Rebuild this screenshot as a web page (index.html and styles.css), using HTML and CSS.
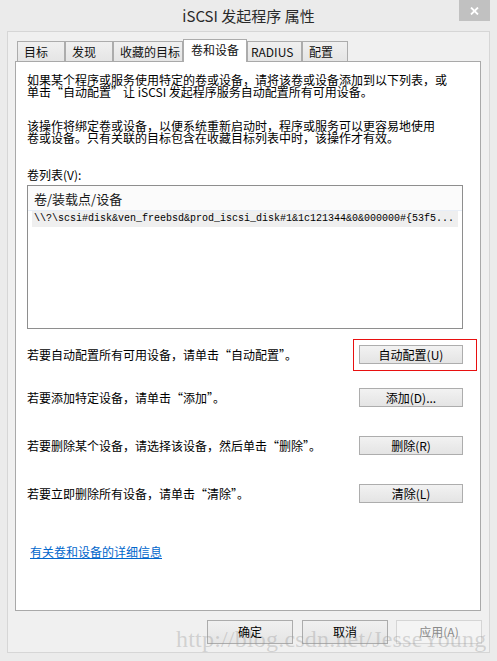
FILE: index.html
```html
<!DOCTYPE html>
<html lang="zh-CN">
<head>
<meta charset="utf-8">
<title>iSCSI 发起程序 属性</title>
<link rel="stylesheet" href="styles.css">
</head>
<body>
<div class="window">
  <div class="titlebar">
    <div class="title">iSCSI 发起程序 属性</div>
    <div class="close">
      <svg width="9" height="8" viewBox="0 0 9 8"><path d="M1 0.5 L8 7.5 M8 0.5 L1 7.5" stroke="#fff" stroke-width="1.8" fill="none"/></svg>
    </div>
  </div>
  <div class="client">
    <div class="tabs">
      <div class="tab w1">目标</div>
      <div class="tab w2">发现</div>
      <div class="tab w3">收藏的目标</div>
      <div class="tab w4 sel">卷和设备</div>
      <div class="tab w5">RADIUS</div>
      <div class="tab w6">配置</div>
    </div>
    <div class="panel">
      <p class="para">如果某个程序或服务使用特定的卷或设备，请将该卷或设备添加到以下列表，或<br>单击“自动配置”让 iSCSI 发起程序服务自动配置所有可用设备。</p>
      <p class="para para2">该操作将绑定卷或设备，以便系统重新启动时，程序或服务可以更容易地使用<br>卷或设备。只有关联的目标包含在收藏目标列表中时，该操作才有效。</p>
      <div class="label">卷列表(V):</div>
      <div class="listbox">
        <div class="lv-head">卷/装载点/设备</div>
        <div class="lv-row">\\?\scsi#disk&amp;ven_freebsd&amp;prod_iscsi_disk#1&amp;1c121344&amp;0&amp;000000#{53f5...</div>
      </div>
      <div class="row r1">
        <span>若要自动配置所有可用设备，请单击“自动配置”。</span>
        <span class="btn marked">自动配置(U)</span>
      </div>
      <div class="row r2">
        <span>若要添加特定设备，请单击“添加”。</span>
        <span class="btn">添加(D)...</span>
      </div>
      <div class="row r3">
        <span>若要删除某个设备，请选择该设备，然后单击“删除”。</span>
        <span class="btn">删除(R)</span>
      </div>
      <div class="row r3">
        <span>若要立即删除所有设备，请单击“清除”。</span>
        <span class="btn">清除(L)</span>
      </div>
      <a class="link" href="#">有关卷和设备的详细信息</a>
    </div>
    <div class="footer">
      <span class="fbtn ok">确定</span>
      <span class="fbtn">取消</span>
      <span class="fbtn disabled">应用(A)</span>
    </div>
    <div class="watermark">http://blog.csdn.net/JesseYoung</div>
  </div>
</div>
</body>
</html>
```
FILE: styles.css
```css
* { box-sizing: border-box; }
html, body { margin: 0; padding: 0; }
body {
  width: 497px;
  height: 661px;
  overflow: hidden;
  background: #ebebeb;
  font-family: "Noto Sans CJK SC", "Noto Sans", sans-serif;
  font-size: 12px;
  color: #000;
}
.window {
  display: flex;
  flex-direction: column;
  height: 661px;
}
.titlebar {
  height: 31px;
  flex: none;
  display: grid;
  grid-template-columns: 1fr auto 1fr;
}
.title {
  grid-column: 2;
  font-size: 15px;
  line-height: 31px;
  color: #2a2a2a;
  white-space: nowrap;
}
.close {
  grid-column: 3;
  justify-self: end;
  align-self: start;
  width: 31px;
  height: 21px;
  margin-right: 7px;
  background: #c1c1c1;
  display: flex;
  align-items: center;
  justify-content: center;
}
.client {
  flex: 1;
  margin: 0 7px 8px;
  border: 1px solid #d6d6d6;
  background: #f0f0f0;
  padding: 7px 0 0 7px;
  position: relative;
}
.tabs {
  display: flex;
  align-items: flex-end;
  height: 22px;
  padding-left: 2px;
}
.tab {
  height: 20px;
  border: 1px solid #acacac;
  border-bottom: 0;
  background: linear-gradient(#f0f0f0, #e5e5e5);
  line-height: 19px;
  padding-left: 6px;
  white-space: nowrap;
  color: #111;
}
.tab.sel {
  height: 23px;
  margin-bottom: -1px;
  background: #fff;
  line-height: 20px;
  padding-left: 7px;
  position: relative;
  z-index: 1;
}
.w1 { width: 48px; }
.w2 { width: 48px; }
.w3 { width: 70px; }
.w4 { width: 64px; }
.w5 { width: 55px; padding-left: 3px; }
.w6 { width: 46px; }
.panel {
  width: 466px;
  height: 550px;
  border: 1px solid #a9a9a9;
  background: #fff;
  padding: 12px 17px 0 11px;
  display: flex;
  flex-direction: column;
}
.para {
  margin: 0;
  line-height: 12px;
  white-space: nowrap;
}
.para2 { margin-top: 22px; }
.label {
  margin-top: 25px;
  line-height: 12px;
}
.listbox {
  margin-top: 4px;
  width: 436px;
  height: 144px;
  flex: none;
  border: 1px solid #8e8e8e;
  background: #fff;
}
.lv-head {
  height: 25px;
  border-bottom: 1px solid #e8eef7;
  background: #fbfbfb;
  font-size: 13px;
  line-height: 25px;
  padding-left: 6px;
  color: #1a1a1a;
}
.lv-row {
  margin-left: 4px;
  width: 426px;
  height: 16px;
  background: #efefef;
  font-family: "Liberation Mono", "DejaVu Sans Mono", monospace;
  font-size: 10px;
  line-height: 16px;
  padding-left: 2px;
  white-space: nowrap;
  overflow: hidden;
}
.row {
  display: flex;
  justify-content: space-between;
  align-items: center;
  height: 19px;
}
.r1 { margin-top: 16px; }
.r2 { margin-top: 24px; }
.r3 { margin-top: 29px; }
.btn {
  width: 104px;
  height: 19px;
  border: 1px solid #adadad;
  background: linear-gradient(#f2f2f2, #e4e4e4);
  text-align: center;
  line-height: 17px;
}
.marked { position: relative; }
.marked::after {
  content: "";
  position: absolute;
  top: -7px;
  left: -7px;
  right: -15px;
  bottom: -8px;
  border: 1px solid #e81010;
}
.link {
  margin-top: 42px;
  margin-left: 3px;
  align-self: flex-start;
  color: #0066cc;
  line-height: 13px;
  text-decoration: underline;
}
.footer {
  display: flex;
  justify-content: flex-end;
  gap: 8px;
  margin-top: 9px;
  padding-right: 7px;
}
.fbtn {
  width: 86px;
  height: 24px;
  border: 1px solid #acacac;
  background: linear-gradient(#f0f0f0, #e5e5e5);
  text-align: center;
  line-height: 22px;
}
.fbtn.ok { margin-right: 1px; }
.fbtn.disabled {
  border-color: #d5d5d5;
  background: #f4f4f4;
  color: #8a8a8a;
}
.watermark {
  position: absolute;
  left: 168px;
  top: 595px;
  font-family: "Liberation Serif", serif;
  font-size: 24px;
  line-height: 24px;
  letter-spacing: 0.2px;
  color: rgba(150, 150, 150, 0.36);
  white-space: nowrap;
  pointer-events: none;
}
```
